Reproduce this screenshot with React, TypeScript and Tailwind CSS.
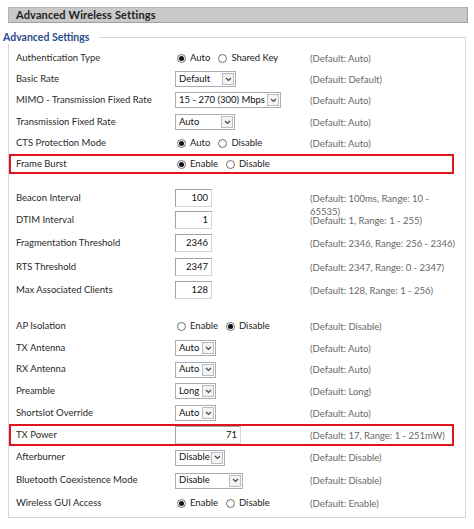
import React from "react";

type Ctl =
  | { kind: "radio"; opts: string[]; sel: number }
  | { kind: "select"; value: string; w: string }
  | { kind: "input"; value: string; w: string };

type Row =
  | { spacer: true; h: string }
  | { spacer?: false; label: string; h: string; ctl: Ctl; def?: React.ReactNode; red?: boolean };

const rows: Row[] = [
  { label: "Authentication Type", h: "h-[22px]", ctl: { kind: "radio", opts: ["Auto", "Shared Key"], sel: 0 }, def: "(Default: Auto)" },
  { label: "Basic Rate", h: "h-[20px]", ctl: { kind: "select", value: "Default", w: "w-[61px]" }, def: "(Default: Default)" },
  { label: "MIMO - Transmission Fixed Rate", h: "h-[22px]", ctl: { kind: "select", value: "15 - 270 (300) Mbps", w: "w-[106px]" }, def: "(Default: Auto)" },
  { label: "Transmission Fixed Rate", h: "h-[22px]", ctl: { kind: "select", value: "Auto", w: "w-[60px]" }, def: "(Default: Auto)" },
  { label: "CTS Protection Mode", h: "h-[21px]", ctl: { kind: "radio", opts: ["Auto", "Disable"], sel: 0 }, def: "(Default: Auto)" },
  { label: "Frame Burst", h: "h-[20px]", ctl: { kind: "radio", opts: ["Enable", "Disable"], sel: 0 }, red: true },
  { spacer: true, h: "h-[13px]" },
  { label: "Beacon Interval", h: "h-[22px]", ctl: { kind: "input", value: "100", w: "w-[37px]" }, def: (<>(Default: 100ms, Range: 10 -<br />65535)</>) },
  { label: "DTIM Interval", h: "h-[22px]", ctl: { kind: "input", value: "1", w: "w-[37px]" }, def: "(Default: 1, Range: 1 - 255)" },
  { label: "Fragmentation Threshold", h: "h-[24px]", ctl: { kind: "input", value: "2346", w: "w-[37px]" }, def: "(Default: 2346, Range: 256 - 2346)" },
  { label: "RTS Threshold", h: "h-[24px]", ctl: { kind: "input", value: "2347", w: "w-[37px]" }, def: "(Default: 2347, Range: 0 - 2347)" },
  { label: "Max Associated Clients", h: "h-[22px]", ctl: { kind: "input", value: "128", w: "w-[37px]" }, def: "(Default: 128, Range: 1 - 256)" },
  { spacer: true, h: "h-[14px]" },
  { label: "AP Isolation", h: "h-[22px]", ctl: { kind: "radio", opts: ["Enable", "Disable"], sel: 1 }, def: "(Default: Disable)" },
  { label: "TX Antenna", h: "h-[22px]", ctl: { kind: "select", value: "Auto", w: "w-[41px]" }, def: "(Default: Auto)" },
  { label: "RX Antenna", h: "h-[21px]", ctl: { kind: "select", value: "Auto", w: "w-[41px]" }, def: "(Default: Auto)" },
  { label: "Preamble", h: "h-[22px]", ctl: { kind: "select", value: "Long", w: "w-[41px]" }, def: "(Default: Long)" },
  { label: "Shortslot Override", h: "h-[22px]", ctl: { kind: "select", value: "Auto", w: "w-[41px]" }, def: "(Default: Auto)" },
  { label: "TX Power", h: "h-[22px]", ctl: { kind: "input", value: "71", w: "w-[66px]" }, def: "(Default: 17, Range: 1 - 251mW)", red: true },
  { label: "Afterburner", h: "h-[23px]", ctl: { kind: "select", value: "Disable", w: "w-[50px]" }, def: "(Default: Disable)" },
  { label: "Bluetooth Coexistence Mode", h: "h-[23px]", ctl: { kind: "select", value: "Disable", w: "w-[68px]" }, def: "(Default: Disable)" },
  { label: "Wireless GUI Access", h: "h-[22px]", ctl: { kind: "radio", opts: ["Enable", "Disable"], sel: 0 }, def: "(Default: Enable)" },
];

function Radio({ checked }: { checked: boolean }) {
  return (
    <span className="w-[9px] h-[9px] rounded-full border border-[#6e6e6e] bg-white flex items-center justify-center shrink-0">
      {checked && <span className="w-[5px] h-[5px] rounded-full bg-[#111]" />}
    </span>
  );
}

function Control({ ctl }: { ctl: Ctl }) {
  if (ctl.kind === "radio") {
    return (
      <div className="flex items-center pl-[2px]">
        {ctl.opts.map((o, i) => (
          <div key={o} className={`flex items-center ${i > 0 ? "ml-[8px]" : ""}`}>
            <Radio checked={i === ctl.sel} />
            <span className="ml-[4px] text-[#222]">{o}</span>
          </div>
        ))}
      </div>
    );
  }
  if (ctl.kind === "select") {
    return (
      <div className={`${ctl.w} h-[16px] border border-[#a7adb5] bg-white flex items-center pl-[3px] pr-[1px]`}>
        <span className="flex-1 whitespace-nowrap overflow-hidden text-[#111]">{ctl.value}</span>
        <span className="w-[12px] h-[12px] border border-[#b9bcc2] bg-[#f3f3f3] flex items-center justify-center shrink-0">
          <svg width="7" height="5" viewBox="0 0 7 5">
            <path d="M1 1 L3.5 3.5 L6 1" fill="none" stroke="#4a4a4a" strokeWidth="1.2" />
          </svg>
        </span>
      </div>
    );
  }
  return (
    <div className={`${ctl.w} h-[18px] border border-[#a3a3a3] border-b-[#d6d6d6] border-r-[#d6d6d6] bg-white flex items-center justify-end pr-[3px] text-[#111]`}>
      {ctl.value}
    </div>
  );
}

export default function App() {
  return (
    <div className="w-[474px] h-[529px] bg-white font-['Lato','Liberation_Sans',sans-serif] text-[9.5px] text-[#2a2a2a] pt-[7px] overflow-hidden">
      <div className="ml-[8px] w-[460px] h-[16px] bg-[#c9c9c9] border border-[#b4b4b4] border-b-[#a0a0a0] border-r-[#a0a0a0] flex items-center pl-[7px] font-bold text-[11px] text-[#222] tracking-[0.15px]">
        Advanced Wireless Settings
      </div>
      <div className="mt-[7px] ml-[3px] w-[463px]">
        <div className="flex h-[14px]">
          <span className="font-bold text-[10.5px] leading-[14px] text-[#2a4b8d] whitespace-nowrap">Advanced Settings</span>
          <div className="flex-1 ml-[10px] mt-[7px] border-t border-r border-[#d6d6d6]" />
        </div>
        <div className="ml-[5px] border-l border-r border-b border-[#d6d6d6] pt-[3px] pb-[3px]">
          {rows.map((r, i) =>
            r.spacer ? (
              <div key={i} className={r.h} />
            ) : (
              <div
                key={i}
                className={`${r.h} w-[445px] flex items-center border-2 pl-[5px] ${r.red ? "border-[#e0141e]" : "border-transparent"}`}
              >
                <div className="w-[159px] shrink-0 whitespace-nowrap">{r.label}</div>
                <div className="w-[135px] shrink-0 flex items-center">
                  <Control ctl={r.ctl} />
                </div>
                <div className="h-[13px] leading-[13px] whitespace-nowrap text-[#686868] overflow-visible">{r.def}</div>
              </div>
            )
          )}
        </div>
      </div>
    </div>
  );
}
